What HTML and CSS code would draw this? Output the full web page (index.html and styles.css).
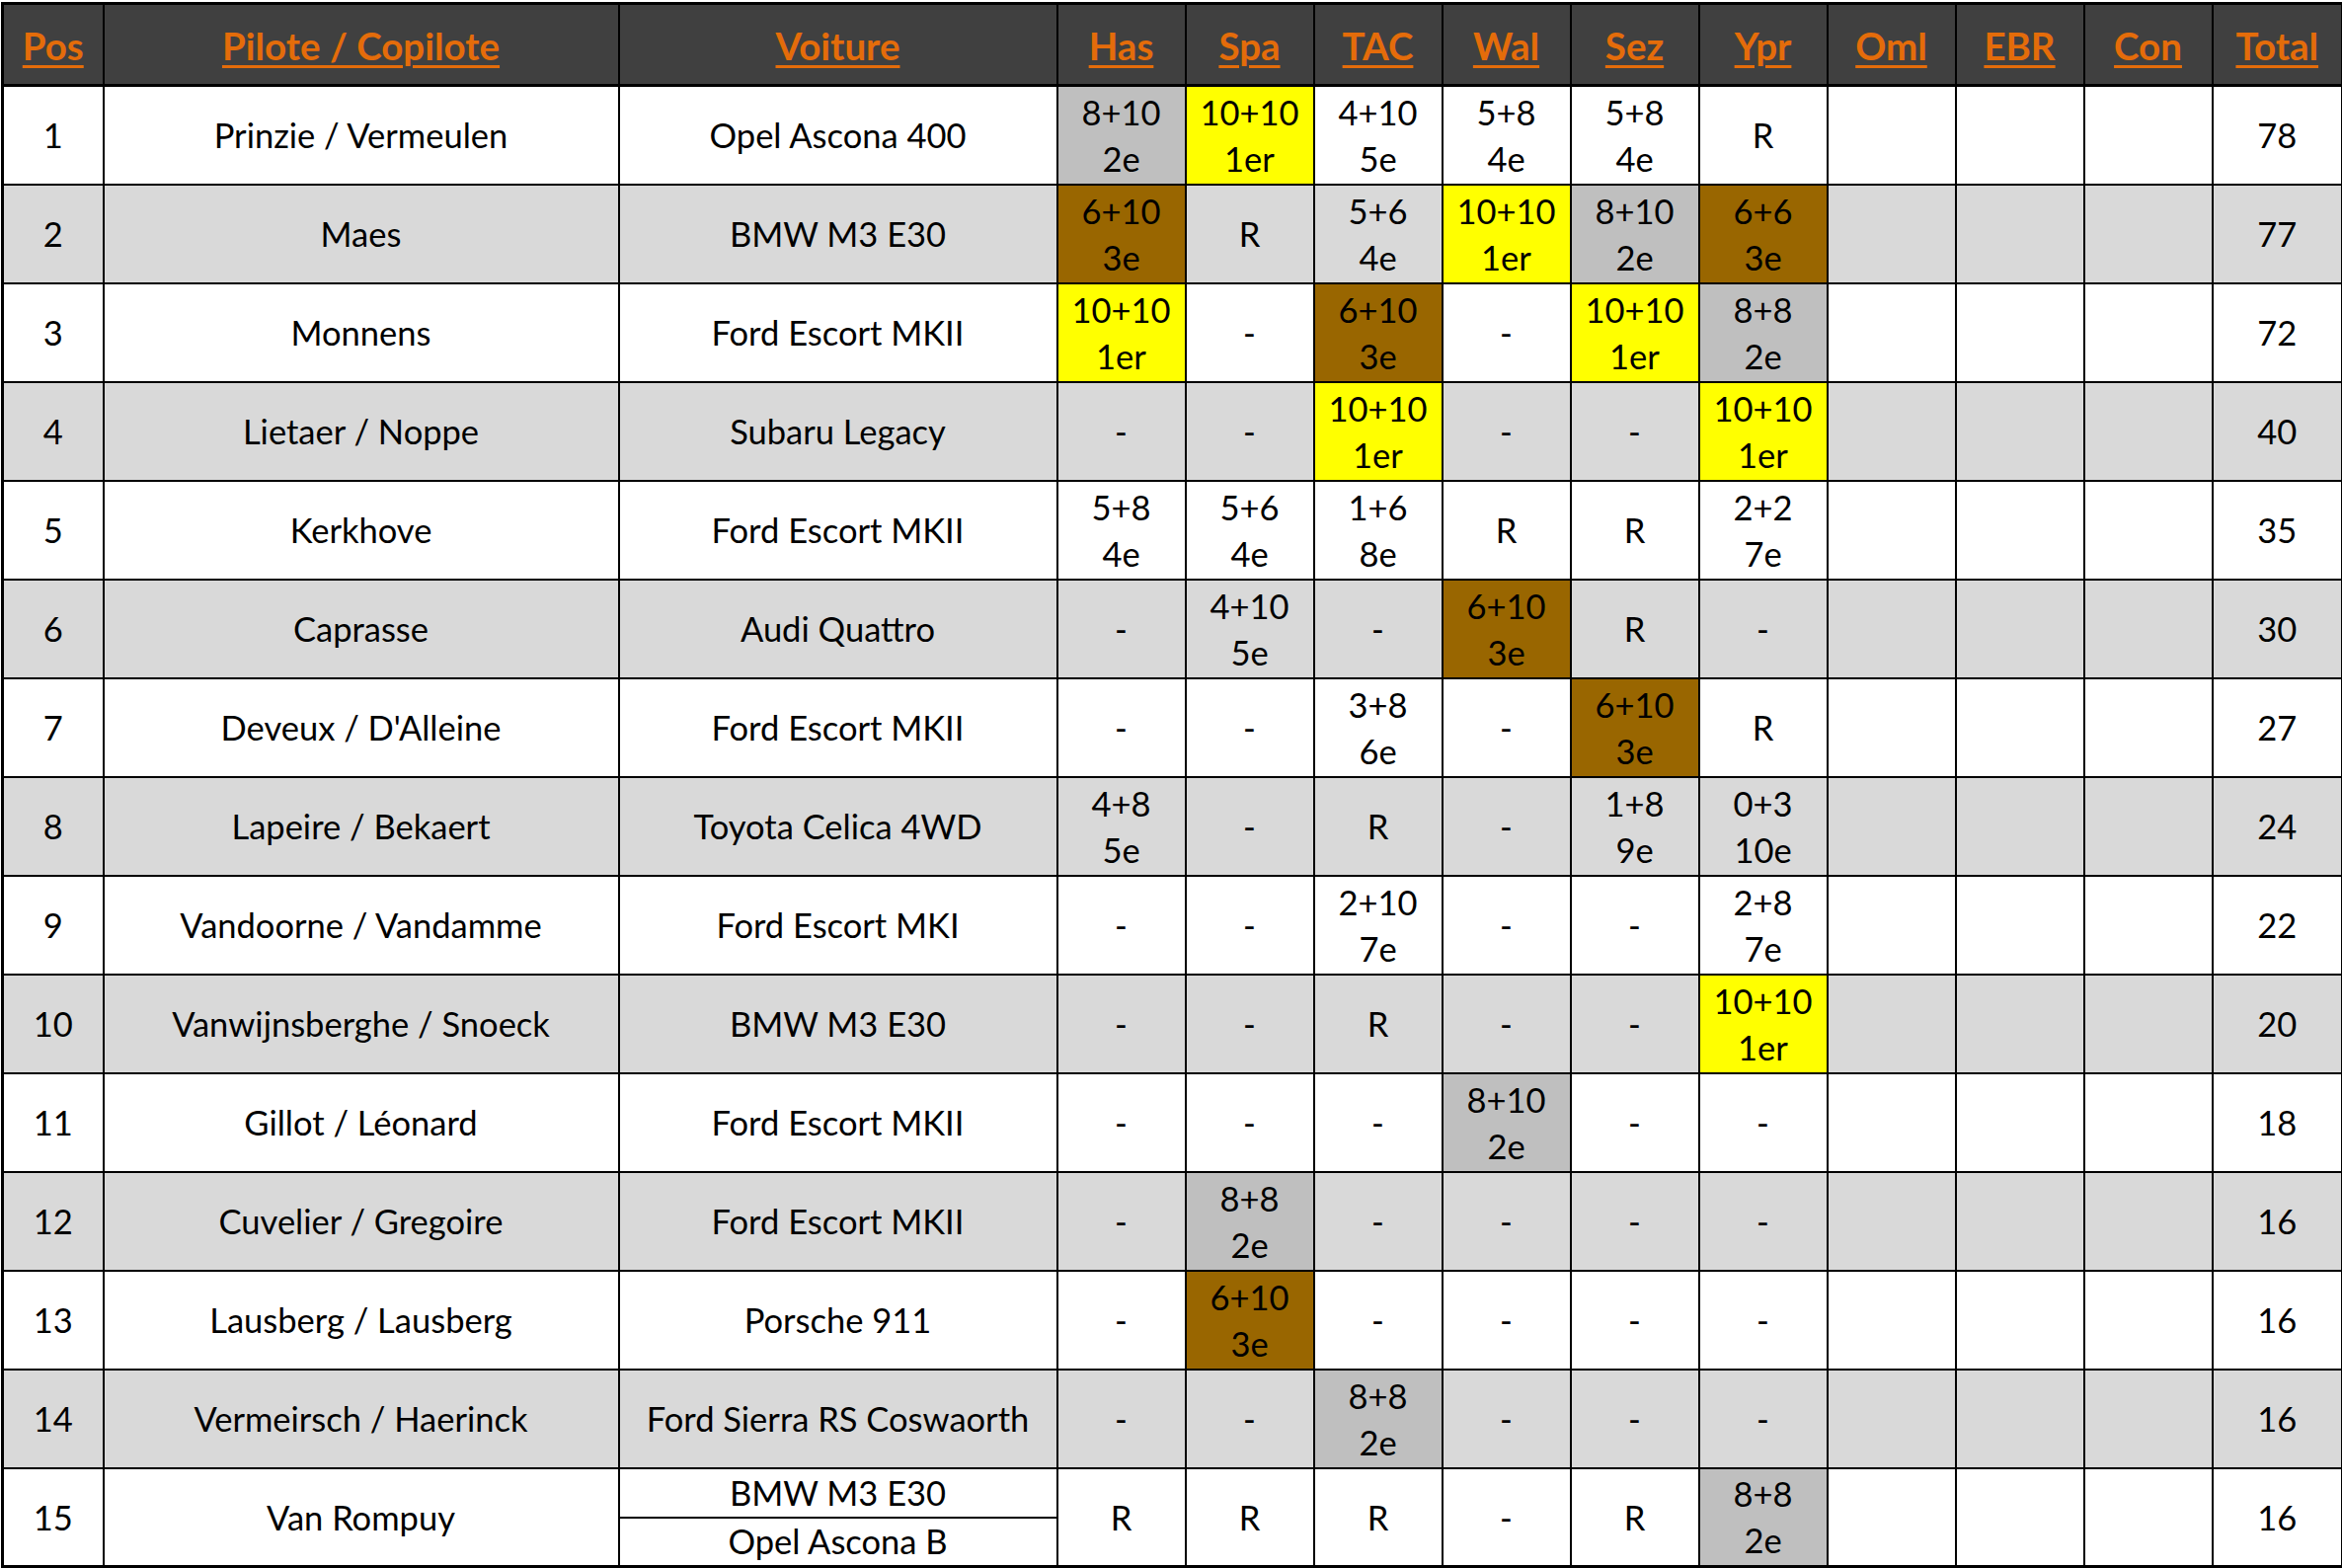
FILE: index.html
```html
<!DOCTYPE html>
<html>
<head>
<meta charset="utf-8">
<link rel="stylesheet" href="styles.css">
</head>
<body>
<table class="standings">
  <colgroup>
    <col class="c-pos"><col class="c-pilot"><col class="c-car">
    <col class="c-race"><col class="c-race"><col class="c-race"><col class="c-race"><col class="c-race">
    <col class="c-race"><col class="c-race"><col class="c-race"><col class="c-race">
    <col class="c-total">
  </colgroup>
  <thead>
    <tr>
      <th><span class="h">Pos</span></th>
      <th><span class="h">Pilote / Copilote</span></th>
      <th><span class="h">Voiture</span></th>
      <th><span class="h">Has</span></th>
      <th><span class="h">Spa</span></th>
      <th><span class="h">TAC</span></th>
      <th><span class="h">Wal</span></th>
      <th><span class="h">Sez</span></th>
      <th><span class="h">Ypr</span></th>
      <th><span class="h">Oml</span></th>
      <th><span class="h">EBR</span></th>
      <th><span class="h">Con</span></th>
      <th><span class="h">Total</span></th>
    </tr>
  </thead>
  <tbody>
    <tr class="odd">
      <td>1</td><td>Prinzie / Vermeulen</td><td>Opel Ascona 400</td>
      <td class="p2">8+10<br>2e</td><td class="p1">10+10<br>1er</td><td>4+10<br>5e</td><td>5+8<br>4e</td><td>5+8<br>4e</td><td>R</td>
      <td></td><td></td><td></td><td>78</td>
    </tr>
    <tr class="even">
      <td>2</td><td>Maes</td><td>BMW M3 E30</td>
      <td class="p3">6+10<br>3e</td><td>R</td><td>5+6<br>4e</td><td class="p1">10+10<br>1er</td><td class="p2">8+10<br>2e</td><td class="p3">6+6<br>3e</td>
      <td></td><td></td><td></td><td>77</td>
    </tr>
    <tr class="odd">
      <td>3</td><td>Monnens</td><td>Ford Escort MKII</td>
      <td class="p1">10+10<br>1er</td><td>-</td><td class="p3">6+10<br>3e</td><td>-</td><td class="p1">10+10<br>1er</td><td class="p2">8+8<br>2e</td>
      <td></td><td></td><td></td><td>72</td>
    </tr>
    <tr class="even">
      <td>4</td><td>Lietaer / Noppe</td><td>Subaru Legacy</td>
      <td>-</td><td>-</td><td class="p1">10+10<br>1er</td><td>-</td><td>-</td><td class="p1">10+10<br>1er</td>
      <td></td><td></td><td></td><td>40</td>
    </tr>
    <tr class="odd">
      <td>5</td><td>Kerkhove</td><td>Ford Escort MKII</td>
      <td>5+8<br>4e</td><td>5+6<br>4e</td><td>1+6<br>8e</td><td>R</td><td>R</td><td>2+2<br>7e</td>
      <td></td><td></td><td></td><td>35</td>
    </tr>
    <tr class="even">
      <td>6</td><td>Caprasse</td><td>Audi Quattro</td>
      <td>-</td><td>4+10<br>5e</td><td>-</td><td class="p3">6+10<br>3e</td><td>R</td><td>-</td>
      <td></td><td></td><td></td><td>30</td>
    </tr>
    <tr class="odd">
      <td>7</td><td>Deveux / D'Alleine</td><td>Ford Escort MKII</td>
      <td>-</td><td>-</td><td>3+8<br>6e</td><td>-</td><td class="p3">6+10<br>3e</td><td>R</td>
      <td></td><td></td><td></td><td>27</td>
    </tr>
    <tr class="even">
      <td>8</td><td>Lapeire / Bekaert</td><td>Toyota Celica 4WD</td>
      <td>4+8<br>5e</td><td>-</td><td>R</td><td>-</td><td>1+8<br>9e</td><td>0+3<br>10e</td>
      <td></td><td></td><td></td><td>24</td>
    </tr>
    <tr class="odd">
      <td>9</td><td>Vandoorne / Vandamme</td><td>Ford Escort MKI</td>
      <td>-</td><td>-</td><td>2+10<br>7e</td><td>-</td><td>-</td><td>2+8<br>7e</td>
      <td></td><td></td><td></td><td>22</td>
    </tr>
    <tr class="even">
      <td>10</td><td>Vanwijnsberghe / Snoeck</td><td>BMW M3 E30</td>
      <td>-</td><td>-</td><td>R</td><td>-</td><td>-</td><td class="p1">10+10<br>1er</td>
      <td></td><td></td><td></td><td>20</td>
    </tr>
    <tr class="odd">
      <td>11</td><td>Gillot / Léonard</td><td>Ford Escort MKII</td>
      <td>-</td><td>-</td><td>-</td><td class="p2">8+10<br>2e</td><td>-</td><td>-</td>
      <td></td><td></td><td></td><td>18</td>
    </tr>
    <tr class="even">
      <td>12</td><td>Cuvelier / Gregoire</td><td>Ford Escort MKII</td>
      <td>-</td><td class="p2">8+8<br>2e</td><td>-</td><td>-</td><td>-</td><td>-</td>
      <td></td><td></td><td></td><td>16</td>
    </tr>
    <tr class="odd">
      <td>13</td><td>Lausberg / Lausberg</td><td>Porsche 911</td>
      <td>-</td><td class="p3">6+10<br>3e</td><td>-</td><td>-</td><td>-</td><td>-</td>
      <td></td><td></td><td></td><td>16</td>
    </tr>
    <tr class="even">
      <td>14</td><td>Vermeirsch / Haerinck</td><td>Ford Sierra RS Coswaorth</td>
      <td>-</td><td>-</td><td class="p2">8+8<br>2e</td><td>-</td><td>-</td><td>-</td>
      <td></td><td></td><td></td><td>16</td>
    </tr>
    <tr class="odd half">
      <td rowspan="2">15</td><td rowspan="2">Van Rompuy</td><td class="sub">BMW M3 E30</td>
      <td rowspan="2">R</td><td rowspan="2">R</td><td rowspan="2">R</td><td rowspan="2">-</td><td rowspan="2">R</td><td rowspan="2" class="p2">8+8<br>2e</td>
      <td rowspan="2"></td><td rowspan="2"></td><td rowspan="2"></td><td rowspan="2">16</td>
    </tr>
    <tr class="odd half">
      <td class="sub">Opel Ascona B</td>
    </tr>
  </tbody>
</table>
</body>
</html>
```

FILE: styles.css
```css
html, body {
  margin: 0;
  padding: 0;
  background: #ffffff;
  overflow: hidden;
}

body {
  padding: 2px 0 0 1px;
}

.standings {
  border-collapse: collapse;
  table-layout: fixed;
  width: 2370px;
  font-family: Lato, "Liberation Sans", sans-serif;
  font-size: 34.5px;
  color: #000000;
  border: 3px solid #000000;
}

.c-pos { width: 102px; }
.c-pilot { width: 522px; }
.c-car { width: 444px; }
.c-race { width: 130px; }
.c-total { width: 132px; }

.standings th,
.standings td {
  border: 2px solid #000000;
  text-align: center;
  vertical-align: middle;
  padding: 0;
  line-height: 47px;
  white-space: nowrap;
  overflow: hidden;
}

.standings thead tr {
  height: 83px;
}

.standings th {
  background: #404040;
  border-bottom-width: 3px;
  padding-top: 3px;
}

.h {
  font-weight: 700;
  font-size: 38.5px;
  color: #E46C0A;
  text-decoration: underline;
  text-decoration-thickness: 3px;
  text-underline-offset: 5px;
}

.standings tbody tr {
  height: 100px;
}

.standings tbody tr.half {
  height: 50px;
}

.odd td { background: #ffffff; }
.even td { background: #D9D9D9; }

.standings td.p1 { background: #FFFF00; }
.standings td.p2 { background: #BFBFBF; }
.standings td.p3 { background: #996600; }

.standings td.sub {
  line-height: 46px;
}
```
